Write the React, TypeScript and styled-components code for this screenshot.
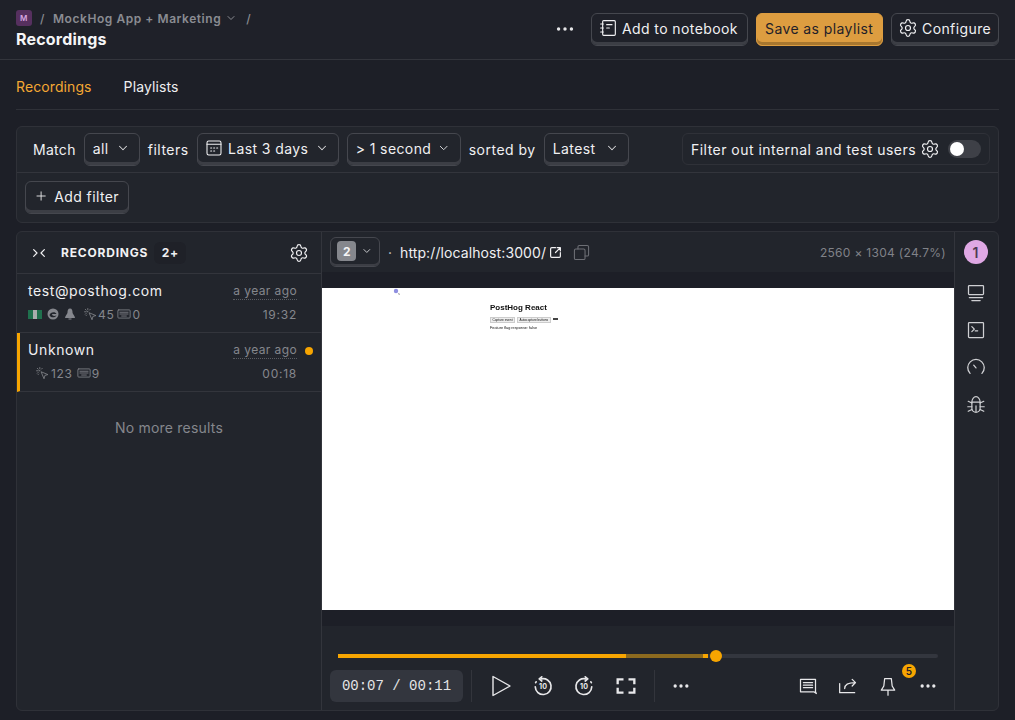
import React from 'react';
import styled, {createGlobalStyle} from 'styled-components';
import {ChevronDown, Plus, Settings, Ellipsis} from 'lucide-react';

const GlobalStyle = createGlobalStyle`
    html, body {
        margin: 0;
        padding: 0;
        background: #1d1f27;
        color: #f0f0f2;
        font-family: Inter, "Liberation Sans", sans-serif;
        font-size: 14px;
    }
    * {
        box-sizing: border-box;
    }
`;

const Page = styled.div`
    width: 1015px;
    height: 720px;
    overflow: hidden;
    display: flex;
    flex-direction: column;
`;

const TopBar = styled.header`
    height: 60px;
    flex: none;
    background: #1f2129;
    border-bottom: 1px solid #33353c;
    padding: 9px 16px 0;
    display: flex;
    justify-content: space-between;
`;

const Crumbs = styled.div`
    display: flex;
    align-items: center;
    height: 18px;
    font-size: 12px;
    font-weight: 600;
    letter-spacing: 0.55px;
    color: #8a8c92;
`;

const ProjectBadge = styled.span`
    width: 16px;
    height: 16px;
    border-radius: 3px;
    background: #56305f;
    color: #d7a6e0;
    font-size: 8px;
    display: flex;
    align-items: center;
    justify-content: center;
    margin-right: 8px;
`;

const Slash = styled.span<{$gap: number}>`
    margin-right: ${(p) => p.$gap}px;
    font-weight: 500;
`;

const PageTitle = styled.div`
    font-size: 16px;
    font-weight: 700;
    letter-spacing: 0.2px;
    line-height: 20px;
    margin-top: 2px;
    color: #f5f5f6;
`;

const TopActions = styled.div`
    display: flex;
    align-items: flex-start;
    gap: 8px;
    padding-top: 4px;
`;

const MoreButton = styled.span`
    width: 28px;
    height: 32px;
    margin-right: 4px;
    display: flex;
    align-items: center;
    justify-content: center;
    color: #e6e6e8;
`;

const Button = styled.div<{$primary?: boolean; $width?: number}>`
    height: 33px;
    ${(p) => p.$width ? `width: ${p.$width}px;` : ''}
    padding: 0 8px 3px;
    display: flex;
    align-items: center;
    gap: 6px;
    flex: none;
    border-radius: 6px;
    font-size: 14px;
    font-weight: 400;
    letter-spacing: 0.4px;
    white-space: nowrap;
    color: ${(p) => p.$primary ? '#1f2129' : '#f0f0f2'};
    background: ${(p) => p.$primary ? '#dd9d40' : '#1f2129'};
    border: 1px solid ${(p) => p.$primary ? '#dd9d40' : '#45474e'};
    box-shadow: inset 0 -3px 0 ${(p) => p.$primary ? '#a8772f' : '#3c3e45'};
`;

const Tabs = styled.nav`
    margin: 0 16px;
    height: 50px;
    flex: none;
    padding-top: 4px;
    display: flex;
    align-items: center;
    gap: 32px;
    border-bottom: 1px solid #2f3138;
`;

const Tab = styled.span<{$active?: boolean}>`
    font-size: 14px;
    letter-spacing: 0.1px;
    color: ${(p) => p.$active ? '#f4a833' : '#eeeef0'};
`;

const FilterCard = styled.section`
    margin: 16px 16px 0;
    height: 97px;
    flex: none;
    background: #22252c;
    border: 1px solid #2f3138;
    border-radius: 6px;
    display: flex;
    flex-direction: column;
`;

const FilterRow = styled.div`
    height: 46px;
    flex: none;
    border-bottom: 1px solid #33353c;
    padding: 6px 8px 0 16px;
    display: flex;
    align-items: flex-start;
    gap: 8px;
`;

const FilterLabel = styled.span<{$spacing?: number}>`
    line-height: 33px;
    font-size: 14px;
    letter-spacing: ${(p) => p.$spacing ?? 0.5}px;
    color: #f0f0f2;
    white-space: nowrap;
`;

const MenuSelect = styled(Button)`
    justify-content: space-between;
    background: #22252c;
    padding-right: 9px;
`;

const InternalBox = styled.div`
    margin-left: auto;
    width: 308px;
    height: 32px;
    border: 1px solid #2f3138;
    border-radius: 6px;
    padding: 0 8px;
    display: flex;
    align-items: center;
    font-size: 14px;
    letter-spacing: 0.47px;
    white-space: nowrap;
    color: #f0f0f2;
`;

const Toggle = styled.span`
    width: 33px;
    height: 18px;
    margin-left: auto;
    border-radius: 9px;
    background: #3e4047;
    padding: 2px;
    display: flex;
`;

const ToggleKnob = styled.span`
    width: 14px;
    height: 14px;
    border-radius: 50%;
    background: #fff;
`;

const AddRow = styled.div`
    padding: 8px;
`;

const Cog = styled(Settings)`
    flex: none;
    margin: 0 -2px;
`;

const PlayerCard = styled.section`
    margin: 8px 16px 0;
    height: 480px;
    flex: none;
    background: #22252c;
    border: 1px solid #2f3138;
    border-radius: 6px;
    display: flex;
    overflow: hidden;
`;

const ListPane = styled.aside`
    width: 305px;
    flex: none;
    border-right: 1px solid #33353c;
    display: flex;
    flex-direction: column;
`;

const ListHeader = styled.div`
    height: 42px;
    flex: none;
    border-bottom: 1px solid #33353c;
    display: flex;
    align-items: center;
    padding: 0 14px;
`;

const ListTitle = styled.span`
    font-size: 12px;
    font-weight: 700;
    letter-spacing: 0.8px;
    margin-left: 14px;
    color: #f2f2f4;
`;

const CountPill = styled.span`
    margin-left: 6px;
    width: 32px;
    height: 22px;
    border-radius: 6px;
    background: #1f2128;
    font-size: 12px;
    font-weight: 700;
    letter-spacing: 0.5px;
    display: flex;
    align-items: center;
    justify-content: center;
`;

const Row = styled.div<{$selected?: boolean}>`
    height: 59px;
    flex: none;
    border-bottom: 1px solid #33353c;
    border-left: 3px solid ${(p) => p.$selected ? '#f7a501' : 'transparent'};
    padding: 7px 24px 0 8px;
    display: flex;
    flex-direction: column;
    gap: 6px;
    position: relative;
`;

const RowLine = styled.div`
    display: flex;
    justify-content: space-between;
    align-items: center;
    height: 18px;
`;

const RowName = styled.span`
    font-size: 14px;
    font-weight: 400;
    letter-spacing: 0.6px;
    color: #f0f0f2;
`;

const RowAgo = styled.span`
    font-size: 12px;
    letter-spacing: 0.4px;
    color: #85878d;
    border-bottom: 1px dotted #5a5c62;
    line-height: 16px;
    padding-top: 2px;
`;

const RowStats = styled.div<{$indent?: number}>`
    display: flex;
    align-items: center;
    padding-left: ${(p) => p.$indent || 0}px;
    font-size: 12px;
    letter-spacing: 0.7px;
    color: #85878d;
`;

const Duration = styled.span`
    font-size: 12px;
    letter-spacing: 0.75px;
    color: #85878d;
`;

const Flag = styled.span`
    width: 14px;
    height: 9px;
    margin-right: 5px;
    display: flex;
    opacity: 0.75;
    filter: blur(0.4px);
`;

const FlagBand = styled.span<{$c: string}>`
    flex: 1;
    background: ${(p) => p.$c};
`;

const UnreadDot = styled.span`
    position: absolute;
    right: 8px;
    top: 14px;
    width: 8px;
    height: 8px;
    border-radius: 50%;
    background: #f7a501;
`;

const NoMore = styled.div`
    text-align: center;
    font-size: 14px;
    letter-spacing: 0.2px;
    color: #85878d;
    margin-top: 27px;
`;

const PlayerPane = styled.div`
    flex: 1;
    min-width: 0;
    display: flex;
    flex-direction: column;
`;

const MetaBar = styled.div`
    height: 40px;
    flex: none;
    padding: 0 8px;
    display: flex;
    align-items: center;
`;

const WindowSelect = styled.div`
    width: 50px;
    height: 30px;
    padding: 0 6px 2px;
    border: 1px solid #45474e;
    border-radius: 6px;
    box-shadow: inset 0 -2px 0 #3c3e45;
    display: flex;
    align-items: center;
    gap: 5px;
`;

const WindowNumber = styled.span`
    width: 20px;
    height: 20px;
    border-radius: 4px;
    background: #85878d;
    color: #f4f4f5;
    font-size: 12px;
    font-weight: 700;
    display: flex;
    align-items: center;
    justify-content: center;
`;

const Dot = styled.span`
    margin: 0 8px;
    font-size: 14px;
    color: #c9cacd;
`;

const Url = styled.span`
    font-size: 14px;
    letter-spacing: 0.1px;
    color: #f0f0f2;
    margin-right: 3px;
`;

const Resolution = styled.span`
    margin-left: auto;
    font-size: 12px;
    letter-spacing: 0.3px;
    color: #808288;
`;

const Stage = styled.div`
    height: 354px;
    flex: none;
    background: #1d1f27;
    padding: 16px 0;
`;

const ReplayFrame = styled.div`
    height: 322px;
    background: #fff;
    position: relative;
    overflow: hidden;
    color: #111;
    font-family: "Liberation Sans", sans-serif;
`;

const ReplayCursor = styled.svg`
    position: absolute;
    left: 71px;
    top: 0;
    filter: blur(0.3px);
`;

const ReplayPage = styled.div`
    position: absolute;
    left: 168px;
    top: 15px;
    filter: blur(0.25px);
`;

const ReplayTitle = styled.div`
    font-size: 8px;
    font-weight: 700;
    line-height: 10px;
`;

const ReplayButtons = styled.div`
    display: flex;
    align-items: center;
    gap: 2px;
    margin-top: 4px;
`;

const ReplayButton = styled.span`
    height: 6px;
    padding: 0 1.5px;
    border: 0.5px solid #ccc;
    background: #eee;
    font-size: 3.2px;
    line-height: 5px;
    white-space: nowrap;
`;

const ReplayMark = styled.span`
    width: 5px;
    height: 2px;
    background: #444;
    margin-bottom: 3px;
`;

const ReplayText = styled.div`
    font-size: 3.8px;
    line-height: 5px;
    margin-top: 3px;
    white-space: nowrap;
`;

const Controls = styled.div`
    flex: 1;
    padding: 28px 6px 0 8px;
    display: flex;
    flex-direction: column;
`;

const Timeline = styled.div`
    margin: 0 10px 0 8px;
    height: 4px;
    border-radius: 2px;
    background: #33363e;
    display: flex;
    position: relative;
`;

const Segment = styled.span<{$c: string}>`
    height: 4px;
    background: ${(p) => p.$c};
`;

const Knob = styled.span`
    position: absolute;
    top: -4px;
    width: 12px;
    height: 12px;
    border-radius: 50%;
    background: #f7a501;
`;

const ControlRow = styled.div`
    margin-top: 12px;
    height: 32px;
    display: flex;
    align-items: center;
`;

const TimeBox = styled.div`
    width: 133px;
    height: 32px;
    border-radius: 6px;
    background: #33363e;
    font-family: "Liberation Mono", monospace;
    font-size: 14px;
    color: #e4e4e6;
    display: flex;
    align-items: center;
    justify-content: center;
`;

const ControlDivider = styled.span<{$left: number; $right: number}>`
    width: 1px;
    height: 32px;
    background: #33353c;
    margin: 0 ${(p) => p.$right}px 0 ${(p) => p.$left}px;
`;

const IconButton = styled.span<{$width: number}>`
    width: ${(p) => p.$width}px;
    height: 32px;
    flex: none;
    display: flex;
    align-items: center;
    justify-content: center;
    color: #e8e8ea;
    position: relative;
`;

const Spacer = styled.span`
    flex: 1;
`;

const CountBadge = styled.span`
    position: absolute;
    left: 34px;
    top: -6px;
    width: 14px;
    height: 14px;
    border-radius: 50%;
    background: #f7a501;
    color: #1f2129;
    font-size: 10px;
    font-weight: 600;
    display: flex;
    align-items: center;
    justify-content: center;
`;

const SideRail = styled.div`
    width: 44px;
    flex: none;
    border-left: 1px solid #33353c;
    display: flex;
    flex-direction: column;
    align-items: center;
    padding: 8px 2px 0 0;
    color: #cfd0d3;
`;

const Avatar = styled.span`
    width: 24px;
    height: 24px;
    border-radius: 50%;
    background: #dfa8e4;
    color: #4d3a52;
    font-size: 14px;
    font-weight: 600;
    display: flex;
    align-items: center;
    justify-content: center;
    margin-bottom: 10px;
`;

const RailIcon = styled.span`
    width: 37px;
    height: 37px;
    display: flex;
    align-items: center;
    justify-content: center;
`;

type IconProps = {size?: number, color?: string, style?: React.CSSProperties};

const Svg = ({size = 20, color = 'currentColor', style, children, sw = 1.5}: IconProps & {children: React.ReactNode, sw?: number}) => (
    <svg width={size} height={size} viewBox='0 0 24 24' fill='none' stroke={color} strokeWidth={sw} strokeLinecap='round' strokeLinejoin='round' style={{flex: 'none', ...style}}>
        {children}
    </svg>
);

const NotebookIcon = (p: IconProps) => (
    <Svg {...p} sw={1.7}>
        <rect x='4' y='1' width='19' height='22' rx='1.5'/>
        <path d='M1 6h4M1 12h4M1 18h4M10 7h8M10 12h4'/>
    </Svg>
);

const CalendarIcon = (p: IconProps) => (
    <Svg {...p} sw={1.6}>
        <rect x='1.5' y='1.5' width='21' height='21' rx='2.5'/>
        <path d='M1.5 6.500h21M7 12h1.500M11.500 12h1.500M16 12h1.500M7 16.500h1.500M11.500 16.500h1.500'/>
    </Svg>
);

const SplitIcon = (p: IconProps) => (
    <Svg {...p} sw={1.8}>
        <path d='M4 7l5 5-5 5M20 7l-5 5 5 5'/>
    </Svg>
);

const ClickIcon = (p: IconProps) => (
    <Svg {...p}>
        <path d='M10 9l12 5-5.500 1.500L15 21z'/>
        <path d='M7 1v2M7 6v1M1 7h2M5 7h1M2.500 2.500l1.500 1.500M11.500 2.500L10 4M2.500 11.500L4 10M5 13l-1 1'/>
    </Svg>
);

const KeyboardIcon = (p: IconProps) => (
    <Svg {...p} sw={1.4}>
        <rect x='1.500' y='5' width='21' height='14' rx='1.5'/>
        <path d='M5 9h14M5 12h14M8 15.500h8'/>
    </Svg>
);

const ExternalIcon = (p: IconProps) => (
    <Svg {...p} sw={2.2}>
        <path d='M12 3H5A2 2 0 003 5V19A2 2 0 005 21H19A2 2 0 0021 19V12'/>
        <path d='M21 3l-9 9M15 3h6v6'/>
    </Svg>
);

const CopyIcon = (p: IconProps) => (
    <Svg {...p}>
        <rect x='2' y='7' width='15' height='15' rx='2'/>
        <path d='M7 7V4a2 2 0 012-2h11a2 2 0 012 2v11a2 2 0 01-2 2h-3'/>
    </Svg>
);

const MonitorIcon = (p: IconProps) => (
    <Svg {...p} sw={1.5}>
        <rect x='3' y='3' width='18' height='11' rx='1'/>
        <path d='M4 17.500h16M7 21h10'/>
    </Svg>
);

const TerminalIcon = (p: IconProps) => (
    <Svg {...p} sw={1.5}>
        <rect x='3' y='3' width='18' height='18' rx='1'/>
        <path d='M7 8l3 3-3 3M11 13h3'/>
    </Svg>
);

const GaugeIcon = (p: IconProps) => (
    <Svg {...p} sw={1.4}>
        <path d='M5.500 19a9 9 0 1113 0'/>
        <path d='M12 13L9.500 10'/>
    </Svg>
);

const BugIcon = (p: IconProps) => (
    <Svg {...p} sw={1.3}>
        <path d='M7.500 10a4.500 6 0 019 0v7a4.500 4 0 01-9 0z'/>
        <path d='M12 14v7M7.500 10h9M7.500 11L3.500 9M16.500 11l4-2M7.500 15H3M16.500 15H21M7.500 18l-4 2M16.500 18l4 2'/>
    </Svg>
);

const PlayIcon = (p: IconProps) => (
    <Svg {...p} sw={1.4}>
        <path d='M4 2.500L21 12 4 21.500z'/>
    </Svg>
);

const SkipIcon = ({forward}: {forward?: boolean}) => (
    <svg width={20} height={20} viewBox='0 0 24 24' fill='none' stroke='currentColor' strokeWidth={2} strokeLinecap='round' strokeLinejoin='round'>
        <g transform={forward ? 'translate(24 0) scale(-1 1)' : undefined}>
            <path d='M10 3.500A9.500 9.500 0 1 1 2.700 13'/>
            <path d='M10.500 1L7.500 3.500l3 2.500M3.200 8l.5-1'/>
        </g>
        <text x={12} y={15.500} textAnchor='middle' fontSize={8.500} fontWeight={700} fill='currentColor' stroke='none' fontFamily='Inter, sans-serif'>{'10'}</text>
    </svg>
);

const FullscreenIcon = (p: IconProps) => (
    <svg width={20} height={20} viewBox='0 0 24 24' fill='none' stroke='currentColor' strokeWidth={2.8} {...p}>
        <path d='M9 4H2v6M15 4h7v6M9 20H2v-6M15 20h7v-6'/>
    </svg>
);

const CommentIcon = (p: IconProps) => (
    <Svg {...p}>
        <path d='M3 4h18v15l1 2-3-2H3z'/>
        <path d='M6.500 8h11M6.500 11h11M6.500 14h11'/>
    </Svg>
);

const ShareIcon = (p: IconProps) => (
    <Svg {...p}>
        <path d='M2 9v11h18'/>
        <path d='M8 15c0-5 4-7 13-7M17 4l4 4-4 4'/>
    </Svg>
);

const PinIcon = (p: IconProps) => (
    <Svg {...p}>
        <path d='M8 3h8l1 9 3 5H4l3-5zM12 17v6'/>
    </Svg>
);

const Chevron = ({color}: {color?: string}) => <ChevronDown size={14} color={color || '#d9dadc'} strokeWidth={1.75}/>;

const App = () => {
    return (
        <Page>
            <GlobalStyle/>
            <TopBar>
                <div>
                    <Crumbs>
                        <ProjectBadge>{'M'}</ProjectBadge>
                        <Slash $gap={8}>{'/'}</Slash>
                        <span>{'MockHog App + Marketing'}</span>
                        <ChevronDown size={12} style={{margin: '0 9px 0 4px'}}/>
                        <Slash $gap={0}>{'/'}</Slash>
                    </Crumbs>
                    <PageTitle>{'Recordings'}</PageTitle>
                </div>
                <TopActions>
                    <MoreButton><Ellipsis size={22} strokeWidth={1.75}/></MoreButton>
                    <Button $width={157}><NotebookIcon size={16}/>{'Add to notebook'}</Button>
                    <Button $primary={true} $width={127}>{'Save as playlist'}</Button>
                    <Button $width={108}><Cog size={20} strokeWidth={1.4}/>{'Configure'}</Button>
                </TopActions>
            </TopBar>
            <Tabs>
                <Tab $active={true}>{'Recordings'}</Tab>
                <Tab>{'Playlists'}</Tab>
            </Tabs>
            <FilterCard>
                <FilterRow>
                    <FilterLabel $spacing={0.3}>{'Match'}</FilterLabel>
                    <MenuSelect $width={56}>{'all'}<Chevron/></MenuSelect>
                    <FilterLabel>{'filters'}</FilterLabel>
                    <MenuSelect $width={142}><CalendarIcon size={16}/>{'Last 3 days'}<Chevron/></MenuSelect>
                    <MenuSelect $width={114}>{'> 1 second'}<Chevron/></MenuSelect>
                    <FilterLabel>{'sorted by'}</FilterLabel>
                    <MenuSelect $width={85}>{'Latest'}<Chevron/></MenuSelect>
                    <InternalBox>
                        {'Filter out internal and test users'}
                        <Cog size={20} strokeWidth={1.4} style={{marginLeft: 4}}/>
                        <Toggle><ToggleKnob/></Toggle>
                    </InternalBox>
                </FilterRow>
                <AddRow>
                    <MenuSelect $width={104}><Plus size={16} strokeWidth={1.5}/>{'Add filter'}</MenuSelect>
                </AddRow>
            </FilterCard>
            <PlayerCard>
                <ListPane>
                    <ListHeader>
                        <SplitIcon size={16}/>
                        <ListTitle>{'RECORDINGS'}</ListTitle>
                        <CountPill>{'2+'}</CountPill>
                        <Cog size={20} strokeWidth={1.4} style={{marginLeft: 'auto'}}/>
                    </ListHeader>
                    <Row>
                        <RowLine>
                            <RowName>{'test@posthog.com'}</RowName>
                            <RowAgo>{'a year ago'}</RowAgo>
                        </RowLine>
                        <RowLine>
                            <RowStats>
                                <Flag>
                                    <FlagBand $c='#1f8a58'/>
                                    <FlagBand $c='#d5dcd8'/>
                                    <FlagBand $c='#1f8a58'/>
                                </Flag>
                                <svg width={12} height={12} viewBox='0 0 24 24' style={{marginRight: 5}}>
                                    <circle cx={12} cy={12} r={11} fill='#85878d'/>
                                    <path d='M5 14c1-6 12-8 14-2H10c0 4 5 5 9 3-2 5-13 5-14-1z' fill='#22252c'/>
                                </svg>
                                <svg width={12} height={12} viewBox='0 0 24 24' style={{marginRight: 8}}>
                                    <path d='M12 1c4 0 5 4 5 8 0 3 5 7 5 11H2c0-4 5-8 5-11 0-4 1-8 5-8z M9 21h6v2H9z' fill='#85878d'/>
                                </svg>
                                <ClickIcon size={13} style={{marginRight: 1}}/>
                                {'45'}
                                <KeyboardIcon size={14} style={{margin: '0 1px 0 3px'}}/>
                                {'0'}
                            </RowStats>
                            <Duration>{'19:32'}</Duration>
                        </RowLine>
                    </Row>
                    <Row $selected={true}>
                        <RowLine>
                            <RowName>{'Unknown'}</RowName>
                            <RowAgo>{'a year ago'}</RowAgo>
                        </RowLine>
                        <RowLine>
                            <RowStats $indent={8}>
                                <ClickIcon size={13} style={{marginRight: 2}}/>
                                {'123'}
                                <KeyboardIcon size={14} style={{margin: '0 1px 0 4px'}}/>
                                {'9'}
                            </RowStats>
                            <Duration>{'00:18'}</Duration>
                        </RowLine>
                        <UnreadDot/>
                    </Row>
                    <NoMore>{'No more results'}</NoMore>
                </ListPane>
                <PlayerPane>
                    <MetaBar>
                        <WindowSelect>
                            <WindowNumber>{'2'}</WindowNumber>
                            <ChevronDown size={12} color='#c9cacd'/>
                        </WindowSelect>
                        <Dot>{'·'}</Dot>
                        <Url>{'http://localhost:3000/'}</Url>
                        <ExternalIcon size={13}/>
                        <CopyIcon size={17} color='#6d6f75' style={{marginLeft: 11}}/>
                        <Resolution>{'2560 × 1304 (24.7%)'}</Resolution>
                    </MetaBar>
                    <Stage>
                        <ReplayFrame>
                            <ReplayCursor width={8} height={8} viewBox='0 0 8 8'>
                                <circle cx={3} cy={3} r={2.2} fill='#8f8fe0'/>
                                <path d='M5 5l2 1-1 1z' fill='#777'/>
                            </ReplayCursor>
                            <ReplayPage>
                                <ReplayTitle>{'PostHog React'}</ReplayTitle>
                                <ReplayButtons>
                                    <ReplayButton>{'Capture event'}</ReplayButton>
                                    <ReplayButton>{'Autocapture buttons'}</ReplayButton>
                                    <ReplayMark/>
                                </ReplayButtons>
                                <ReplayText>{'Feature flag response: false'}</ReplayText>
                            </ReplayPage>
                        </ReplayFrame>
                    </Stage>
                    <Controls>
                        <Timeline>
                            <Segment $c='#f7a501' style={{width: 288}}/>
                            <Segment $c='#8c6a1f' style={{width: 77}}/>
                            <Segment $c='#f7a501' style={{width: 5}}/>
                            <Knob style={{left: 372}}/>
                        </Timeline>
                        <ControlRow>
                            <TimeBox>{'00:07 / 00:11'}</TimeBox>
                            <ControlDivider $left={8} $right={8}/>
                            <IconButton $width={42}><PlayIcon size={24}/></IconButton>
                            <IconButton $width={41}><SkipIcon/></IconButton>
                            <IconButton $width={42}><SkipIcon forward={true}/></IconButton>
                            <IconButton $width={42}><FullscreenIcon/></IconButton>
                            <ControlDivider $left={7} $right={5}/>
                            <IconButton $width={42}><Ellipsis size={20}/></IconButton>
                            <Spacer/>
                            <IconButton $width={40}><CommentIcon/></IconButton>
                            <IconButton $width={40}><ShareIcon/></IconButton>
                            <IconButton $width={40}><PinIcon/><CountBadge>{'5'}</CountBadge></IconButton>
                            <IconButton $width={40}><Ellipsis size={20}/></IconButton>
                        </ControlRow>
                    </Controls>
                </PlayerPane>
                <SideRail>
                    <Avatar>{'1'}</Avatar>
                    <RailIcon><MonitorIcon size={20}/></RailIcon>
                    <RailIcon><TerminalIcon size={20}/></RailIcon>
                    <RailIcon><GaugeIcon size={22}/></RailIcon>
                    <RailIcon><BugIcon size={22}/></RailIcon>
                </SideRail>
            </PlayerCard>
        </Page>
    );
};

export default App;
